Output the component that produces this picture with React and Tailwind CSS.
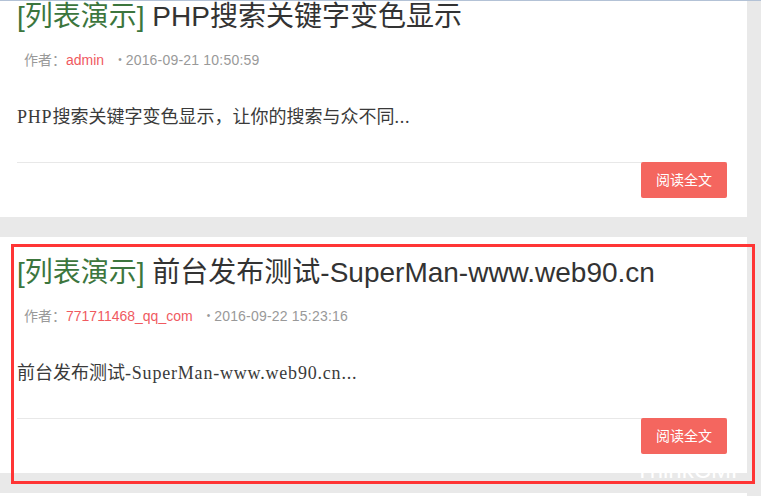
import React from 'react';

const posts = [
  {
    cat: '[列表演示]',
    title: 'PHP搜索关键字变色显示',
    author: 'admin',
    date: '2016-09-21 10:50:59',
    excerpt: 'PHP搜索关键字变色显示，让你的搜索与众不同...',
  },
  {
    cat: '[列表演示]',
    title: '前台发布测试-SuperMan-www.web90.cn',
    author: '771711468_qq_com',
    date: '2016-09-22 15:23:16',
    excerpt: '前台发布测试-SuperMan-www.web90.cn...',
  },
];

const sans = "font-['Liberation_Sans','Noto_Sans_CJK_SC',sans-serif]";
const serif = "font-['Liberation_Serif','Noto_Sans_CJK_SC',serif]";

// latin runs get a touch of spacing so the serif is as wide as the original's
function Excerpt({ text }) {
  const parts = text.split(/([\x20-\x7e]+)/).filter(Boolean);
  return parts.map((part, i) =>
    /^[\x20-\x7e]+$/.test(part) ? (
      <span key={i} className="tracking-[0.8px]">
        {part}
      </span>
    ) : (
      <span key={i}>{part}</span>
    )
  );
}

function PostCard({ post }) {
  return (
    <div className="w-[747px] h-[236px] bg-white pl-[17px] pr-[20px] pt-[20px] shrink-0">
      <h2 className={`${sans} text-[28px] leading-[31px] text-[#333] whitespace-nowrap`}>
        <span className="text-[#3c763d]">{post.cat}</span> {post.title}
      </h2>
      <div className={`${sans} mt-[18px] pl-[7px] text-[14px] leading-[20px] text-[#999] flex items-center`}>
        <span>作者：</span>
        <span className="text-[#f05a5f]">{post.author}</span>
        <span className="ml-[14px] mr-[4px] text-[10px]">•</span>
        <span className="tracking-[0.2px]">{post.date}</span>
      </div>
      <p className={`${serif} mt-[35px] text-[18px] leading-[24px] text-[#3a3a3a] whitespace-nowrap`}>
        <Excerpt text={post.excerpt} />
      </p>
      <div className="mt-[33px] border-t border-[#e8e8e8] flex justify-end">
        <button
          type="button"
          className={`${sans} -mt-px h-[36px] w-[86px] rounded-[2px] bg-[#f4665f] text-[14px] text-white`}
        >
          阅读全文
        </button>
      </div>
    </div>
  );
}

export default function App() {
  return (
    <div className="relative w-[761px] h-[496px] overflow-hidden bg-[#e9e9e9]">
      <div className="flex flex-col gap-[20px] -mt-[19px]">
        {posts.map((p, i) => (
          <PostCard key={i} post={p} />
        ))}
        <div className="w-[747px] h-[236px] bg-white shrink-0" />
      </div>

      {/* top window edge */}
      <div className="absolute left-0 top-0 w-full h-px bg-[#b3c2d6]" />

      {/* highlight frame */}
      <div className="absolute left-[11px] top-[244px] w-[744px] h-[240px] border-[3px] border-[#ff3535]" />

      {/* watermark */}
      <div className={`${sans} absolute left-[635px] top-[456px] text-[24px] leading-[28px] font-light text-white`}>
        ThinkCMF
      </div>
    </div>
  );
}
